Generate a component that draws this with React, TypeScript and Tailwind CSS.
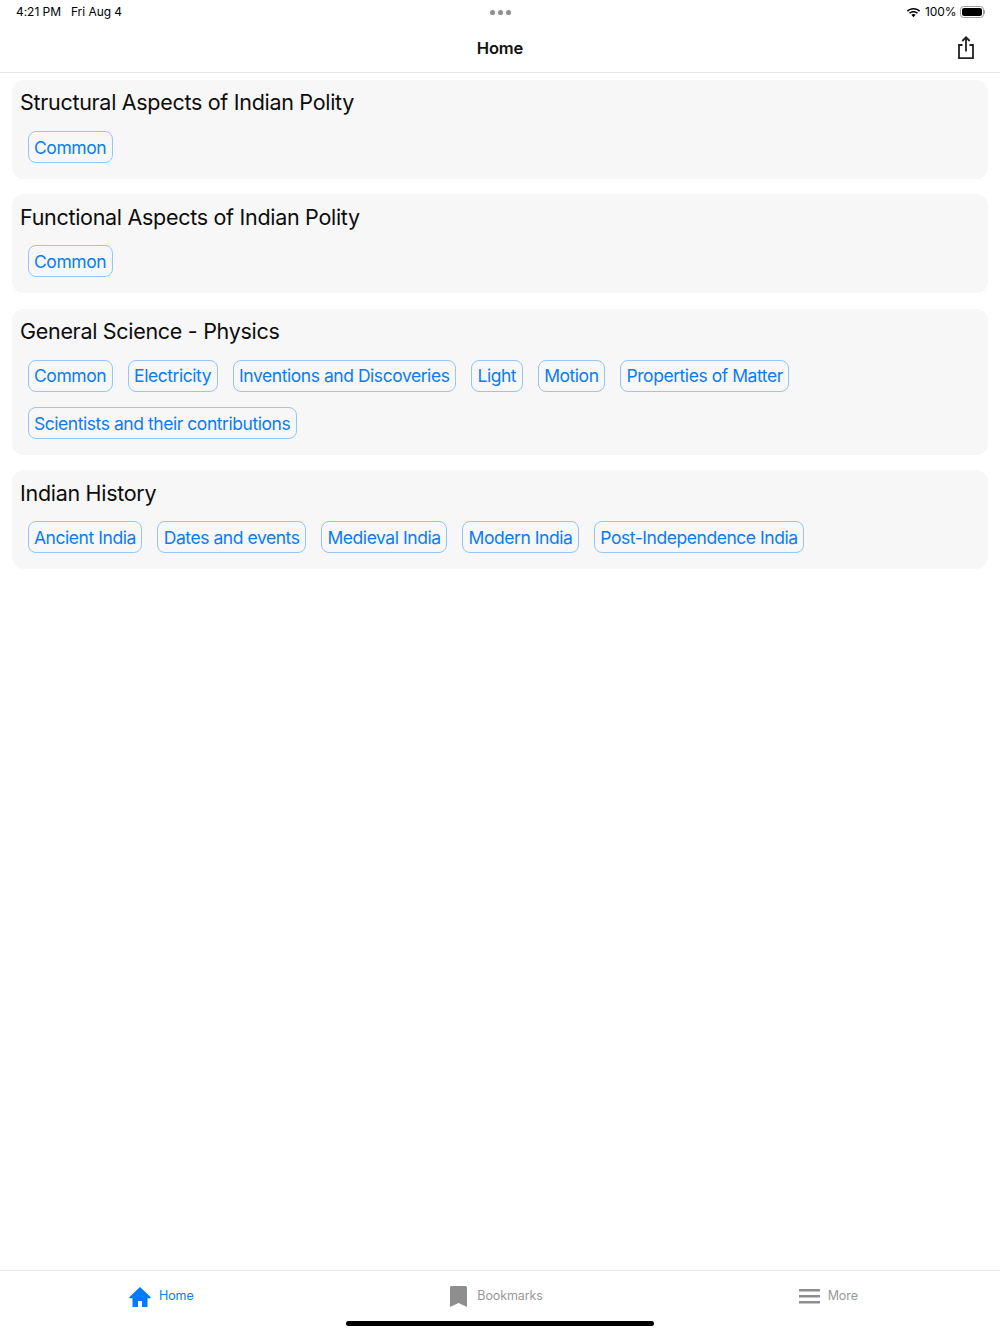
const sections = [
  { title: "Structural Aspects of Indian Polity", tags: ["Common"] },
  { title: "Functional Aspects of Indian Polity", tags: ["Common"] },
  {
    title: "General Science - Physics",
    tags: [
      "Common",
      "Electricity",
      "Inventions and Discoveries",
      "Light",
      "Motion",
      "Properties of Matter",
      "Scientists and their contributions",
    ],
  },
  {
    title: "Indian History",
    tags: ["Ancient India", "Dates and events", "Medieval India", "Modern India", "Post-Independence India"],
  },
];

const StatusBar = () => (
  <div className="relative flex h-6 items-center justify-between pl-4 pr-[15px] text-[12px] leading-none tracking-[-0.05px] text-black">
    <div className="flex gap-[10px]">
      <span>4:21 PM</span>
      <span>Fri Aug 4</span>
    </div>
    <div className="absolute left-[490px] top-[9.500px] flex gap-[3px]">
      <span className="size-[5px] rounded-full bg-[#8e8e8e]" />
      <span className="size-[5px] rounded-full bg-[#8e8e8e]" />
      <span className="size-[5px] rounded-full bg-[#8e8e8e]" />
    </div>
    <div className="flex items-center gap-[3px]">
      <svg width="15" height="11" viewBox="0 0 14 10" className="mr-[1px]">
        <path d="M7 2.200c2 0 3.800.8 5.200 2l1-1.100C11.500 1.600 9.400.7 7 .7S2.500 1.600.8 3.100l1 1.100c1.400-1.200 3.200-2 5.200-2z" fill="#000" />
        <path d="M7 5c1.200 0 2.300.4 3.200 1.200l1-1.100C10 4.100 8.600 3.500 7 3.500s-3 .6-4.200 1.600l1 1.100C4.700 5.400 5.800 5 7 5z" fill="#000" />
        <path d="M7 6.300c-.8 0-1.500.3-2 .8L7 9.400l2-2.300c-.5-.5-1.200-.8-2-.8z" fill="#000" />
      </svg>
      <span>100%</span>
      <div className="flex items-center">
        <div className="h-[12px] w-[24px] rounded-[3.500px] border border-[#a0a0a0] p-[1px]">
          <div className="h-full w-full rounded-[2px] bg-black" />
        </div>
        <div className="ml-[0.5px] h-[4px] w-[1px] rounded-r-full bg-[#a0a0a0]" />
      </div>
    </div>
  </div>
);

const NavBar = () => (
  <div className="relative flex h-[49px] items-center justify-center border-b border-[#e8e8e8]">
    <span className="text-[16.500px] font-semibold leading-none tracking-[-0.15px] text-[#111]">Home</span>
    <svg width="18" height="24" viewBox="0 0 18 24" fill="none" stroke="#222" strokeWidth="1.800" className="absolute right-[25px] top-[12px]">
      <path d="M5.500 9H2v13.200h14V9h-3.500" />
      <path d="M9 15.500V1.500M5.300 5 9 1.300 12.700 5" />
    </svg>
  </div>
);

const Section = ({ title, tags }: { title: string; tags: string[] }) => (
  <section className="rounded-[12px] bg-[#f7f7f7] pb-[15.750px]">
    <h2 className="pl-2 pt-[8.250px] text-[21.500px] font-normal leading-[29px] tracking-[-0.3px] text-[#0c0c0c]">{title}</h2>
    <div className="mt-[13.750px] flex flex-wrap gap-x-[15px] gap-y-[15.500px] pl-[15.500px]">
      {tags.map((tag) => (
        <span
          key={tag}
          className="flex h-[32px] items-center rounded-[8px] border border-[#93c6fc] px-[5.500px] pt-[1px] text-[17.500px] leading-none tracking-[-0.45px] text-[#0a7cf5]"
        >
          {tag}
        </span>
      ))}
    </div>
  </section>
);

const TabBar = () => (
  <div className="relative h-[64px] border-t border-[#e8e8e8]">
    <div className="grid h-[50px] grid-cols-3 text-[12.500px] tracking-[-0.1px]">
      <div className="flex items-center pl-[129px] text-[#0a7cf5]">
        <svg width="22" height="20" viewBox="0 0 22 20" fill="#007aff" className="mr-[8px] mt-[1px]">
          <path d="M11 0 0 10.500l.8.800H3.500V20H9v-6h4v6h5.500v-8.700h2.700l.8-.800z" />
        </svg>
        <span>Home</span>
      </div>
      <div className="flex items-center pl-[117px] text-[#999]">
        <svg width="17" height="21" viewBox="0 0 17 21" fill="#8e8e8e" className="mr-[10px] mt-[1px]">
          <path d="M1.500 0h14A1.500 1.500 0 0 1 17 1.500V21l-8.500-4L0 21V1.500A1.500 1.500 0 0 1 1.500 0z" />
        </svg>
        <span>Bookmarks</span>
      </div>
      <div className="flex items-center pl-[132px] text-[#999]">
        <svg width="21" height="15" viewBox="0 0 21 15" fill="#8e8e8e" className="mr-[8px] mt-[1px]">
          <rect y="0" width="21" height="2.500" />
          <rect y="6" width="21" height="2.500" />
          <rect y="12" width="21" height="2.500" />
        </svg>
        <span>More</span>
      </div>
    </div>
    <div className="absolute bottom-[8px] left-[346px] h-[5px] w-[308px] rounded-full bg-black" />
  </div>
);

export default function App() {
  return (
    <div className="flex h-[1334px] flex-col bg-white font-['Inter',sans-serif]">
      <StatusBar />
      <NavBar />
      <main className="flex flex-1 flex-col gap-[15.500px] px-3 pt-[7px]">
        {sections.map((section) => (
          <Section key={section.title} {...section} />
        ))}
      </main>
      <TabBar />
    </div>
  );
}
